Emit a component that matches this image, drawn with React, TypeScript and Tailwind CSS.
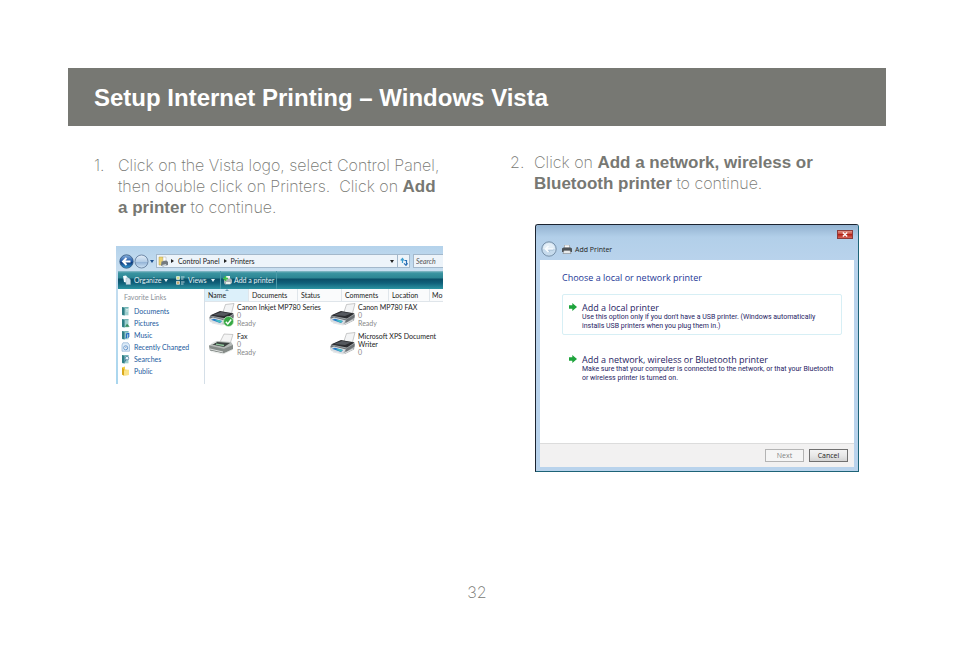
import type { ReactNode } from 'react';

const favoriteLinks = [
  { label: 'Documents', icon: 'book' },
  { label: 'Pictures', icon: 'picture' },
  { label: 'Music', icon: 'music' },
  { label: 'Recently Changed', icon: 'recent' },
  { label: 'Searches', icon: 'search' },
  { label: 'Public', icon: 'folder' },
];

const columns = [
  { label: 'Name', width: 'w-[44px]' },
  { label: 'Documents', width: 'w-[49px]' },
  { label: 'Status', width: 'w-[44px]' },
  { label: 'Comments', width: 'w-[47px]' },
  { label: 'Location', width: 'w-[41px]' },
  { label: 'Mo', width: 'w-[13px]' },
];

const printers = [
  { name: 'Canon Inkjet MP780 Series', jobs: '0', status: 'Ready', kind: 'default' },
  { name: 'Canon MP780 FAX', jobs: '0', status: 'Ready', kind: 'printer' },
  { name: 'Fax', jobs: '0', status: 'Ready', kind: 'fax' },
  { name: 'Microsoft XPS Document Writer', jobs: '0', status: '', kind: 'printer' },
];

function Caret({ className = '' }: { className?: string }) {
  return (
    <svg viewBox="0 0 4 3" className={`h-[3px] w-[4px] shrink-0 ${className}`} fill="currentColor" aria-hidden="true">
      <path d="M0 0h4L2 3z" />
    </svg>
  );
}

function Chevron() {
  return (
    <svg viewBox="0 0 3 4" className="h-[4px] w-[3px] shrink-0 text-[#222]" fill="currentColor" aria-hidden="true">
      <path d="M0 0v4l3-2z" />
    </svg>
  );
}

function BackIcon() {
  return (
    <svg viewBox="0 0 15 15" className="h-[15px] w-[15px]" aria-hidden="true">
      <defs>
        <linearGradient id="back" x2="0" y2="1">
          <stop offset="0" stopColor="#8fb6df" />
          <stop offset="0.5" stopColor="#1d55a5" />
          <stop offset="0.55" stopColor="#0b3478" />
          <stop offset="1" stopColor="#36a0d8" />
        </linearGradient>
      </defs>
      <circle cx="7.5" cy="7.5" r="6.7" fill="url(#back)" stroke="#33587f" strokeWidth="0.8" />
      <path d="M11.5 7.5H4.5M7.5 4L4 7.5 7.5 11" fill="none" stroke="#fff" strokeWidth="1.9" />
    </svg>
  );
}

function ForwardIcon() {
  return (
    <svg viewBox="0 0 15 15" className="h-[15px] w-[15px]" aria-hidden="true">
      <defs>
        <linearGradient id="forward" x2="0" y2="1">
          <stop offset="0" stopColor="#e4eef8" />
          <stop offset="0.5" stopColor="#b4cde6" />
          <stop offset="0.55" stopColor="#93b3d6" />
          <stop offset="1" stopColor="#cfe4f5" />
        </linearGradient>
      </defs>
      <circle cx="7.5" cy="7.5" r="6.5" fill="url(#forward)" stroke="#66809f" strokeWidth="0.9" />
    </svg>
  );
}

function PrintersFolderIcon() {
  return (
    <svg viewBox="0 0 10 11" className="h-[11px] w-[10px] shrink-0" aria-hidden="true">
      <path d="M1 1h4l1 2v6H1z" fill="#ecd473" stroke="#b99c3c" strokeWidth="0.5" />
      <path d="M5 1h3v4H5z" fill="#fff" stroke="#999" strokeWidth="0.4" />
      <path d="M3.5 5.5l5-1L10 6v3l-5 1.5-2-1z" fill="#747a80" />
      <path d="M4 9l4-1 .5 1.4-3.5 1z" fill="#cfd8dd" />
    </svg>
  );
}

function RefreshIcon() {
  return (
    <svg viewBox="0 0 8 9" className="h-[9px] w-[8px]" fill="none" stroke="#2b70b5" strokeWidth="1.2" aria-hidden="true">
      <path d="M2.5 6V1.8M.8 3.5l1.7-2 1.5 2" stroke="#3f9fd0" />
      <path d="M4.5 3.5h2v4.2M4 6.3l2 2 1.6-2" />
    </svg>
  );
}

function OrganizeIcon() {
  return (
    <svg viewBox="0 0 9 10" className="h-[10px] w-[9px] shrink-0" aria-hidden="true">
      <path d="M1 1l3-.5 2 2.5v5L2 7z" fill="#f5fbff" />
      <path d="M4 3h3l1.500 2v4.500H4z" fill="#cfe0ea" stroke="#8dabba" strokeWidth="0.4" />
    </svg>
  );
}

function ViewsIcon() {
  return (
    <svg viewBox="0 0 9 9" className="h-[9px] w-[9px] shrink-0" aria-hidden="true">
      <path d="M.5.5h3v3h-3z" fill="#d5e08d" stroke="#fff" strokeWidth="0.6" />
      <path d="M.5 5.3h3v3h-3z" fill="#c5ab6d" stroke="#fff" strokeWidth="0.6" />
      <path d="M5 1h3.5M5 3h2.5M5 6h3.5M5 8h2.5" stroke="#e2f0f3" strokeWidth="0.8" />
    </svg>
  );
}

function AddPrinterIcon() {
  return (
    <svg viewBox="0 0 9 10" className="h-[10px] w-[9px] shrink-0" aria-hidden="true">
      <path d="M3 1h4v3H3z" fill="#f4f4f4" />
      <path d="M1 5l2-1.5h5L9 5v3L7 9.5H2L1 8z" fill="#a8b3b5" />
      <path d="M3 7h4.5v2H3z" fill="#e9f2ec" />
      <path d="M2.500 1v5M0 3.500h5" stroke="#43c24a" strokeWidth="1.5" />
    </svg>
  );
}

function FavoriteIcon({ kind }: { kind: string }) {
  const frame = 'h-[10px] w-[9px] shrink-0';
  if (kind === 'folder') {
    return (
      <svg viewBox="0 0 9 10" className={frame} aria-hidden="true">
        <path d="M1 1.5L4 .5v3l4 .5v5L2.5 9.5 1 8.5z" fill="#f2cf45" />
        <path d="M3 4.5l5-.8v5.2L3 9.6z" fill="#fbe48a" />
        <path d="M1 1.5l2 1.8v6.2L1 8.5z" fill="#d9a91e" />
      </svg>
    );
  }
  if (kind === 'recent') {
    return (
      <svg viewBox="0 0 9 10" className={frame} aria-hidden="true">
        <path d="M2 .8h5L8.5 3v6.2H1V3z" fill="#dcebf8" stroke="#8fb2d6" strokeWidth="0.7" />
        <circle cx="4.7" cy="5.8" r="2" fill="#fff" stroke="#5b8fc7" strokeWidth="0.9" />
        <path d="M4.7 4.7V6h1" fill="none" stroke="#3b6aa5" strokeWidth="0.5" />
      </svg>
    );
  }
  return (
    <svg viewBox="0 0 9 10" className={frame} aria-hidden="true">
      <path d="M1 1h6.5v8.3H1z" fill="#9fd0cf" />
      <path d="M1 1l2.6.7v7.8L1 8.8z" fill="#2f7f86" />
      <path d="M3.6 1.7h3.9" stroke="#5ba6a7" strokeWidth="0.8" />
      {kind === 'book' && <path d="M5 3.5h2M5 5h2" stroke="#e9f7f7" strokeWidth="0.7" />}
      {kind === 'picture' && <path d="M4 8.8l2-3 2.7 3z" fill="#3a8f5e" />}
      {kind === 'music' && <path d="M5.4 8V4l2.4-.6v3.7M4.5 8h1M6.8 7.2h1" stroke="#1f66c4" strokeWidth="1.1" fill="none" />}
      {kind === 'search' && (
        <>
          <circle cx="6" cy="4.2" r="1.8" fill="#eaf7ff" stroke="#47789a" strokeWidth="0.7" />
          <path d="M5 5.5L3.6 8" stroke="#47789a" strokeWidth="1" />
        </>
      )}
    </svg>
  );
}

function PrinterIcon({ kind }: { kind: string }) {
  if (kind === 'fax') {
    return (
      <svg viewBox="0 0 28 24" className="h-[24px] w-[28px] shrink-0" aria-hidden="true">
        <path d="M12 10L16 2l9 .5L22 12z" fill="#f4f4f4" stroke="#9a9a9a" strokeWidth="0.5" />
        <path d="M1 13.5l8-4.5 14 1 2 3v4l-9 4.5-14-3z" fill="#b5bab7" />
        <path d="M1 13.5l15 3.3 9-3.8v4l-9 4.5-14-3z" fill="#858b88" />
        <path d="M4 12.5l5-2.6 13 1-6 4z" fill="#3c4441" />
        <path d="M8 12.2l8 1.3" stroke="#8fc59b" strokeWidth="1.3" />
        <path d="M2 17l13 3M3 19.5l12 2.5 9-4" stroke="#e8ebe9" strokeWidth="0.9" fill="none" />
        <path d="M3 11.5l4-2 2 .6-4.4 2.4z" fill="#e1e4e2" />
      </svg>
    );
  }
  return (
    <svg viewBox="0 0 28 24" className="h-[24px] w-[28px] shrink-0" aria-hidden="true">
      <path d="M15 9L17.5 1.5l8.5-1L23 12z" fill="#f3f4f5" stroke="#999" strokeWidth="0.5" />
      <path d="M1 14.5l2-2.5 9-3.5 13 1.5 1 2.5-1 5-9 4.5L2 18z" fill="#a4a8ab" />
      <path d="M2 12.5L12 8l13.5 2.5L18 15.5z" fill="#2c2d31" />
      <path d="M5 12l8-3 9 1.5-6 2.5z" fill="#55585e" />
      <path d="M2 13l15.5 3.5 8-5v3l-8 5L2 16z" fill="#6d7276" />
      <path d="M1 16l4-1.5 12 3-3.5 4.5L2 19z" fill="#d8dde1" />
      <path d="M3 16.8l3-1 8 2.2-2 2z" fill="#2679c9" />
      <path d="M7 17.5l3-.6 3.5 1-1.5 1.8z" fill="#43c4c0" />
      <path d="M4 20l10 2 10-5" stroke="#e4e6e8" strokeWidth="1" fill="none" />
      {kind === 'default' && (
        <>
          <circle cx="20.5" cy="18.5" r="5" fill="#36a843" stroke="#cdeecb" strokeWidth="0.7" />
          <path d="M17.8 18.7l2 2.2 3.4-4.4" fill="none" stroke="#fff" strokeWidth="1.5" />
        </>
      )}
    </svg>
  );
}

function ExplorerWindow() {
  return (
    <div className="overflow-hidden bg-white pl-[2px] font-[Lato,sans-serif] text-[7px] leading-[9px] text-[#222] [background:linear-gradient(#b4d2eb,#c8def0_24px,#a9d6ee)]">
      <div className="flex h-[25px] items-center pt-[5px] pl-px">
        <button type="button" aria-label="Back"><BackIcon /></button>
        <button type="button" aria-label="Forward"><ForwardIcon /></button>
        <button type="button" aria-label="Recent pages" className="ml-px"><Caret className="text-[#1c4f8c]" /></button>
        <nav aria-label="Address" className="ml-[2px] flex h-[14px] min-w-0 flex-1 items-center border border-[#a3b8cb] bg-[#edf4fa] pl-px">
          <PrintersFolderIcon />
          <span className="ml-[3px] flex items-center gap-[4px] whitespace-nowrap">
            <Chevron />
            <a href="#control-panel">Control Panel</a>
            <Chevron />
            <a href="#printers">Printers</a>
          </span>
          <button type="button" aria-label="Previous locations" className="mr-[3px] ml-auto"><Caret /></button>
          <button type="button" aria-label="Refresh" className="flex h-full w-[12px] items-center justify-center border-l border-[#a3b8cb]">
            <RefreshIcon />
          </button>
        </nav>
        <input
          type="text"
          aria-label="Search"
          placeholder="Search"
          className="ml-[3px] h-[14px] w-[30px] border border-r-0 border-[#a3b8cb] bg-[#edf4fa] pl-[2px] italic placeholder:text-[#555]"
        />
      </div>

      <div className="flex h-[18px] items-center pl-[4px] text-[#e4f3f6] [background:linear-gradient(#8dbcc9,#3a94a1_2px,#2c8593_7px,#0b4f68_8px,#10607a_12px,#2c94a2)]">
        <button type="button" className="flex items-center">
          <OrganizeIcon />
          <span className="ml-[3px] w-[30px] text-left">Organize</span>
          <Caret />
        </button>
        <button type="button" className="ml-[8px] flex items-center">
          <ViewsIcon />
          <span className="ml-[3px] w-[23px] text-left">Views</span>
          <Caret />
        </button>
        <button type="button" className="ml-[5px] flex h-full items-center border-x border-[#4b9aaa] px-[2px]">
          <AddPrinterIcon />
          <span className="ml-[2px] whitespace-nowrap">Add a printer</span>
        </button>
      </div>

      <div className="flex h-[95px] bg-white">
        <aside className="w-[87px] shrink-0 border-r border-[#d5dfe8] pt-[4px] pl-[3px]">
          <h3 className="pl-[3px] text-[#8b9198]">Favorite Links</h3>
          <ul className="pt-[3px] text-[#1a5a9e]">
            {favoriteLinks.map((link) => (
              <li key={link.label}>
                <a href="#favorites" className="flex h-[12px] items-center gap-[4px]">
                  <FavoriteIcon kind={link.icon} />
                  {link.label}
                </a>
              </li>
            ))}
          </ul>
        </aside>

        <div className="min-w-0 flex-1 overflow-hidden">
          <div className="flex h-[13px] border-b border-[#dfe5ea] bg-[#fafbfc]">
            {columns.map((column) => (
              <button
                key={column.label}
                type="button"
                className={`relative shrink-0 border-r border-[#e0e6eb] pl-[3px] text-left first:bg-[#dcf0fa] last:border-r-0 last:pl-[2px] ${column.width}`}
              >
                {column.label}
                {column.label === 'Name' && (
                  <svg viewBox="0 0 4 2" className="absolute top-0 left-[20px] h-[2px] w-[4px]" aria-hidden="true">
                    <path d="M2 0l2 2H0z" fill="#6f9fb8" />
                  </svg>
                )}
              </button>
            ))}
          </div>
          <ul className="grid grid-cols-[121px_1fr] grid-rows-[29px_29px] pl-[3px]">
            {printers.map((printer) => (
              <li key={printer.name} className="flex min-w-0 gap-px pt-px">
                <PrinterIcon kind={printer.kind} />
                <div className="w-[80px] leading-[8px]">
                  <div className={printer.kind === 'default' ? 'whitespace-nowrap' : ''}>{printer.name}</div>
                  <div className="text-[#888]">{printer.jobs}</div>
                  <div className="text-[#888]">{printer.status}</div>
                </div>
              </li>
            ))}
          </ul>
        </div>
      </div>
    </div>
  );
}

function PrinterOption({ title, selected, children }: { title: string; selected?: boolean; children: ReactNode }) {
  return (
    <button
      type="button"
      className={`flex h-[41px] w-full gap-[5px] rounded-xs border pt-[7px] pl-[6px] text-left text-[#1f2464] ${
        selected ? 'border-[#d7eff5]' : 'border-transparent'
      }`}
    >
      <svg viewBox="0 0 8 8" className="mt-px h-[8px] w-[8px] shrink-0" aria-hidden="true">
        <path d="M0 2.3h3.3V0L8 4 3.3 8V5.7H0z" fill="#1ea43c" />
      </svg>
      <span>
        <span className="block text-[9px] leading-[11px]">{title}</span>
        <span className="block font-[Roboto,sans-serif] text-[7px] leading-[9px] whitespace-nowrap">{children}</span>
      </span>
    </button>
  );
}

function AddPrinterDialog() {
  return (
    <div
      role="dialog"
      aria-labelledby="dialog-title"
      className="rounded-t-[3px] border border-t-[#1b2430] border-r-[#1d6377] border-b-[#1d6377] border-l-[#1b2430] bg-[#b9d3ec] px-[4px] pb-[4px] font-['Open_Sans',sans-serif] text-[#222]"
    >
      <div className="-mx-[4px] flex h-[35px] items-start rounded-t-[2px] pr-[5px] pl-[5px] [background:linear-gradient(#93b3d1,#b2cfe9_12px,#b9d3ec)]">
        <svg viewBox="0 0 16 16" className="mt-[16px] h-[16px] w-[16px]" aria-hidden="true">
          <circle cx="8" cy="8" r="7.2" fill="#c6dbed" stroke="#7189a2" strokeWidth="0.9" />
          <path d="M2 8a6 6 0 0 1 12 0z" fill="#e3eef7" />
          <path d="M12 8H4.5M7.5 5l-3 3 3 3" fill="none" stroke="#f8fcff" strokeWidth="1.6" />
          <path d="M12.5 9.2H7.5l1.5 2" fill="none" stroke="#9db5cb" strokeWidth="0.6" />
        </svg>
        <svg viewBox="0 0 10 9" className="mt-[20px] ml-[5px] h-[9px] w-[10px]" aria-hidden="true">
          <path d="M2.5 0h5v3h-5z" fill="#fafafa" stroke="#888" strokeWidth="0.5" />
          <path d="M0 3.5L1.5 2.5h7L10 3.5V7H0z" fill="#4d5358" />
          <path d="M2 5.5h6L9 8.5H1z" fill="#e7eaec" stroke="#777" strokeWidth="0.5" />
        </svg>
        <h3 id="dialog-title" className="mt-[20px] ml-[3px] text-[7px] leading-[9px]">Add Printer</h3>
        <button
          type="button"
          aria-label="Close"
          className="mt-[5px] ml-auto flex h-[9px] w-[16px] items-center justify-center border border-[#8c3b3b] [background:linear-gradient(#e29488,#c8483b_45%,#b32418_50%,#d8655a)]"
        >
          <svg viewBox="0 0 6 5" className="h-[5px] w-[6px]" aria-hidden="true">
            <path d="M.8.5l4.4 4M5.2.5l-4.4 4" stroke="#fff" strokeWidth="1.3" />
          </svg>
        </button>
      </div>

      <div className="bg-white">
        <div className="h-[183px] pt-[12px] pr-[12px] pl-[22px]">
          <h4 className="text-[9px] leading-[12px] text-[#1d3796]">Choose a local or network printer</h4>
          <div className="flex flex-col gap-[11px] pt-[10px]">
            <PrinterOption title="Add a local printer" selected>
              Use this option only if you don't have a USB printer. (Windows automatically
              <br />
              installs USB printers when you plug them in.)
            </PrinterOption>
            <PrinterOption title="Add a network, wireless or Bluetooth printer">
              Make sure that your computer is connected to the network, or that your Bluetooth
              <br />
              or wireless printer is turned on.
            </PrinterOption>
          </div>
        </div>
        <div className="flex h-[24px] items-center justify-end gap-[5px] border-t border-[#dcdcdc] bg-[#f2f1f1] pr-[6px] text-[7px] leading-[9px]">
          <button type="button" disabled className="h-[13px] w-[39px] border border-[#b4b4b4] bg-[#f5f5f5] text-[#838383]">
            Next
          </button>
          <button type="button" className="h-[13px] w-[39px] border border-[#707070] [background:linear-gradient(#f3f3f3,#e8e8e8_50%,#d4d4d4)]">
            Cancel
          </button>
        </div>
      </div>
    </div>
  );
}

function Strong({ children }: { children: ReactNode }) {
  return <b className="font-['Liberation_Sans',Arial,sans-serif] text-[17px] font-bold">{children}</b>;
}

export default function App() {
  return (
    <div className="min-h-screen bg-white px-[68px] pt-[68px] pb-16 font-[Inter,sans-serif] font-extralight text-[#777873]">
      <header className="flex h-[58px] items-center bg-[#777873] px-[26px] pt-[2px]">
        <h1 className="font-['Liberation_Sans',Arial,sans-serif] text-[24px] leading-[30px] font-bold text-white">
          Setup Internet Printing – Windows Vista
        </h1>
      </header>

      <main className="grid min-h-[454px] grid-cols-2 gap-x-[66px] px-[26px] pt-[26px] text-[16px] leading-[21px]">
        <section className="pt-[3px]">
          <div className="flex">
            <span className="w-[24px] shrink-0">1.</span>
            <p className="whitespace-nowrap">
              Click on the Vista logo, select Control Panel,
              <br />
              then double click on Printers.&nbsp; Click on <Strong>Add</Strong>
              <br />
              <Strong>a printer</Strong> to continue.
            </p>
          </div>
          <div className="pt-[28px] pr-px pl-[22px] font-normal">
            <ExplorerWindow />
          </div>
        </section>

        <section>
          <div className="flex">
            <span className="w-[24px] shrink-0">2.</span>
            <p className="whitespace-nowrap">
              Click on <Strong>Add a network, wireless or</Strong>
              <br />
              <Strong>Bluetooth printer</Strong> to continue.
            </p>
          </div>
          <div className="pt-[30px] pr-px pl-[25px] font-normal">
            <AddPrinterDialog />
          </div>
        </section>
      </main>

      <footer className="text-center text-[16px] leading-[24px]">32</footer>
    </div>
  );
}
